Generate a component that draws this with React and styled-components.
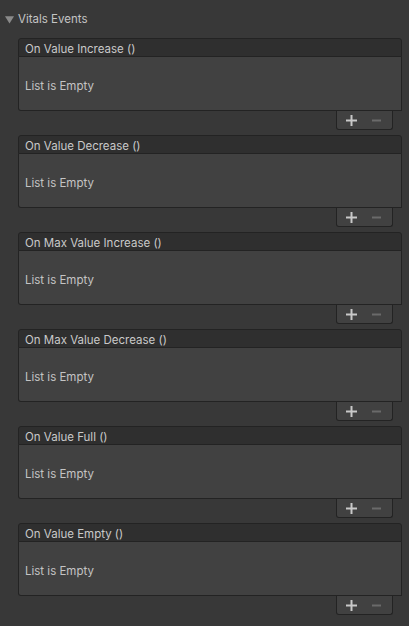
import styled, { createGlobalStyle } from 'styled-components'

const GlobalStyle = createGlobalStyle`
	html, body {
		margin: 0;
		padding: 0;
		background: #383838;
	}
	body {
		font-family: Inter, 'Liberation Sans', sans-serif;
		font-size: 11.5px;
		color: #c4c4c4;
	}
`

const events = [
	'On Value Increase ()',
	'On Value Decrease ()',
	'On Max Value Increase ()',
	'On Max Value Decrease ()',
	'On Value Full ()',
	'On Value Empty ()',
]

const App = () => {
	return (
		<>
			<GlobalStyle />
			<Wrapper>
				<Foldout>
					<Arrow viewBox='0 0 8 8'>
						<path d='M0 1 L8 1 L4 7.5 Z' fill='#8a8a8a' />
					</Arrow>
					<span>Vitals Events</span>
				</Foldout>
				<List>
					{events.map((name) => (
						<EventBlock key={name}>
							<Header>{name}</Header>
							<Body>List is Empty</Body>
							<Footer>
								<FooterBox>
									<IconButton>
										<svg width='11' height='11' viewBox='0 0 11 11'>
											<rect x='4.5' y='0' width='2' height='11' fill='#c8c8c8' />
											<rect x='0' y='4.5' width='11' height='2' fill='#c8c8c8' />
										</svg>
									</IconButton>
									<IconButton>
										<svg width='9' height='11' viewBox='0 0 9 11'>
											<rect x='0' y='4.5' width='9' height='2' fill='#6a6a6a' />
										</svg>
									</IconButton>
								</FooterBox>
							</Footer>
						</EventBlock>
					))}
				</List>
			</Wrapper>
		</>
	)
}

const Wrapper = styled.div`
	width: 409px;
	height: 626px;
	padding-top: 8px;
	box-sizing: border-box;
	overflow: hidden;
`

const Foldout = styled.div`
	display: flex;
	align-items: center;
	height: 18px;
	padding-left: 5px;
	padding-top: 2px;
	gap: 4px;
	color: #c4c4c4;
`

const Arrow = styled.svg`
	width: 9px;
	height: 9px;
`

const List = styled.div`
	display: flex;
	flex-direction: column;
	gap: 5px;
	margin: 10px 7px 0 18px;
`

const EventBlock = styled.div`
	display: flex;
	flex-direction: column;
`

const Header = styled.div`
	height: 19px;
	box-sizing: border-box;
	display: flex;
	align-items: center;
	padding-left: 6px;
	padding-top: 2px;
	background: #2f2f2f;
	border: 1px solid #232323;
	border-radius: 3px 3px 0 0;
	color: #c9c9c9;
`

const Body = styled.div`
	height: 54px;
	box-sizing: border-box;
	display: flex;
	align-items: center;
	padding-left: 6px;
	padding-top: 4px;
	background: #414141;
	border: 1px solid #232323;
	border-top: none;
	border-radius: 0 0 0 3px;
	color: #c4c4c4;
`

const Footer = styled.div`
	display: flex;
	justify-content: flex-end;
	padding-right: 9px;
`

const FooterBox = styled.div`
	display: flex;
	align-items: center;
	gap: 15px;
	width: 57px;
	height: 19px;
	box-sizing: border-box;
	padding: 0 0 0 9px;
	background: #414141;
	border: 1px solid #232323;
	border-top: none;
	border-radius: 0 0 3px 3px;
`

const IconButton = styled.div`
	display: flex;
	align-items: center;
	justify-content: center;
	height: 16px;
`

export default App
